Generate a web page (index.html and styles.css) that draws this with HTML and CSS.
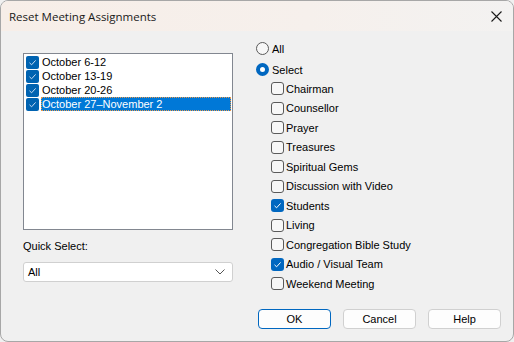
FILE: index.html
```html
<!DOCTYPE html>
<html lang="en">
<head>
  <meta charset="UTF-8" />
  <title>Reset Meeting Assignments</title>
  <link rel="stylesheet" href="styles.css">
</head>
<body>

<div class="window">
  <div class="titlebar">
    <span class="title">Reset Meeting Assignments</span>
    <svg class="close" width="11" height="11" viewBox="0 0 11 11">
      <path d="M0.5 0.5 L10.5 10.5 M10.5 0.5 L0.5 10.5" stroke="#1a1a1a" stroke-width="1.1" fill="none"/>
    </svg>
  </div>

  <div class="content">
    <div class="columns">
      <div class="left">
        <div class="listbox">
          <div class="list-row">
            <span class="lcheck"><svg width="13" height="13" viewBox="0 0 13 13"><path d="M3.5 6.8 L5.6 8.8 L9.6 4.4" stroke="#c9dcf2" stroke-width="1" fill="none"/></svg></span>
            <span class="list-text">October 6-12</span>
          </div>
          <div class="list-row">
            <span class="lcheck"><svg width="13" height="13" viewBox="0 0 13 13"><path d="M3.5 6.8 L5.6 8.8 L9.6 4.4" stroke="#c9dcf2" stroke-width="1" fill="none"/></svg></span>
            <span class="list-text">October 13-19</span>
          </div>
          <div class="list-row">
            <span class="lcheck"><svg width="13" height="13" viewBox="0 0 13 13"><path d="M3.5 6.8 L5.6 8.8 L9.6 4.4" stroke="#c9dcf2" stroke-width="1" fill="none"/></svg></span>
            <span class="list-text">October 20-26</span>
          </div>
          <div class="list-row">
            <span class="lcheck"><svg width="13" height="13" viewBox="0 0 13 13"><path d="M3.5 6.8 L5.6 8.8 L9.6 4.4" stroke="#c9dcf2" stroke-width="1" fill="none"/></svg></span>
            <span class="list-text selected">October 27–November 2</span>
          </div>
        </div>

        <div class="quick-label">Quick Select:</div>
        <div class="combo">
          <span>All</span>
          <svg width="10" height="6" viewBox="0 0 10 6"><path d="M0.5 0.5 L5 5 L9.5 0.5" stroke="#555" stroke-width="1" fill="none"/></svg>
        </div>
      </div>

      <div class="right">
        <div class="radio-row">
          <span class="radio"></span>All
        </div>
        <div class="radio-row">
          <span class="radio on"></span>Select
        </div>
        <div class="options">
          <div class="opt"><span class="box"></span>Chairman</div>
          <div class="opt"><span class="box"></span>Counsellor</div>
          <div class="opt"><span class="box"></span>Prayer</div>
          <div class="opt"><span class="box"></span>Treasures</div>
          <div class="opt"><span class="box"></span>Spiritual Gems</div>
          <div class="opt"><span class="box"></span>Discussion with Video</div>
          <div class="opt"><span class="box on"><svg width="13" height="13" viewBox="0 0 13 13"><path d="M3.5 6.8 L5.6 8.8 L9.6 4.4" stroke="#fff" stroke-width="1" fill="none"/></svg></span>Students</div>
          <div class="opt"><span class="box"></span>Living</div>
          <div class="opt"><span class="box"></span>Congregation Bible Study</div>
          <div class="opt"><span class="box on"><svg width="13" height="13" viewBox="0 0 13 13"><path d="M3.5 6.8 L5.6 8.8 L9.6 4.4" stroke="#fff" stroke-width="1" fill="none"/></svg></span>Audio / Visual Team</div>
          <div class="opt"><span class="box"></span>Weekend Meeting</div>
        </div>
      </div>
    </div>

    <div class="buttons">
      <button class="btn default">OK</button>
      <button class="btn">Cancel</button>
      <button class="btn">Help</button>
    </div>
  </div>
</div>

</body>
</html>
```

FILE: styles.css
```css
* {
  box-sizing: border-box;
  margin: 0;
  padding: 0;
}

html, body {
  width: 514px;
  height: 342px;
  background: #f0f0f0;
  font-family: "Liberation Sans", Arial, sans-serif;
  font-size: 11px;
  color: #000;
  overflow: hidden;
}

.window {
  width: 514px;
  height: 342px;
  border: 1px solid #a7a7a7;
  border-radius: 8px;
  overflow: hidden;
  background: #f0f0f0;
}

.titlebar {
  height: 30px;
  display: flex;
  align-items: center;
  justify-content: space-between;
  padding: 0 12px 0 8px;
  background: linear-gradient(to right, #f7eee8, #f6f0ec 60%, #f3f2f1);
}

.title {
  font-family: "Open Sans", "Noto Sans", sans-serif;
  font-size: 11.5px;
  color: #1a1a1a;
}

.close {
  margin-right: -1px;
}

.content {
  height: 309px;
  display: flex;
  flex-direction: column;
}

.columns {
  display: flex;
  height: 277px;
}

/* left column */
.left {
  width: 210px;
  margin-left: 22px;
  margin-top: 22px;
}

.listbox {
  width: 210px;
  height: 177px;
  background: #fff;
  border: 1px solid #828790;
  padding: 1px 0 0 2px;
}

.list-row {
  display: flex;
  align-items: center;
  height: 14px;
}

.lcheck {
  width: 13px;
  height: 13px;
  background: #0063b1;
  border-radius: 2px;
  display: flex;
  margin-right: 2px;
}

.list-text {
  line-height: 14px;
  height: 14px;
  padding-left: 1px;
  white-space: nowrap;
}

.list-text.selected {
  flex: 1;
  margin-right: 1px;
  background: #0078d7;
  color: #fff;
  outline: 1px dotted #e99a4c;
  outline-offset: -1px;
}

.quick-label {
  margin-top: 9px;
  height: 15px;
  line-height: 15px;
}

.combo {
  margin-top: 8px;
  height: 20px;
  background: #fff;
  border: 1px solid #d0d0d0;
  border-radius: 3px;
  display: flex;
  align-items: center;
  justify-content: space-between;
  padding: 0 7px 0 4px;
}

/* right column */
.right {
  margin-left: 23px;
  margin-top: 7px;
}

.radio-row {
  display: flex;
  align-items: center;
  height: 21px;
}

.radio {
  width: 13px;
  height: 13px;
  border: 1px solid #5a5a5a;
  border-radius: 50%;
  background: #f7f7f7;
  margin-right: 3px;
}

.radio.on {
  border: 4px solid #0067c0;
  background: #fff;
}

.options {
  margin-left: 15px;
  margin-top: -1px;
}

.opt {
  display: flex;
  align-items: center;
  height: 19.5px;
}

.box {
  width: 13px;
  height: 13px;
  border: 1px solid #5a5a5a;
  border-radius: 3px;
  background: #f7f7f7;
  margin-right: 2px;
  display: flex;
}

.box.on {
  border: none;
  background: #0067c0;
}

/* bottom buttons */
.buttons {
  display: flex;
  justify-content: flex-end;
  gap: 12px;
  padding-right: 12px;
  padding-top: 1px;
}

.btn {
  width: 73px;
  height: 20px;
  font-family: inherit;
  font-size: 11px;
  background: #fdfdfd;
  border: 1px solid #d0d0d0;
  border-radius: 4px;
  color: #000;
}

.btn.default {
  border: 1px solid #0067c0;
}
```
